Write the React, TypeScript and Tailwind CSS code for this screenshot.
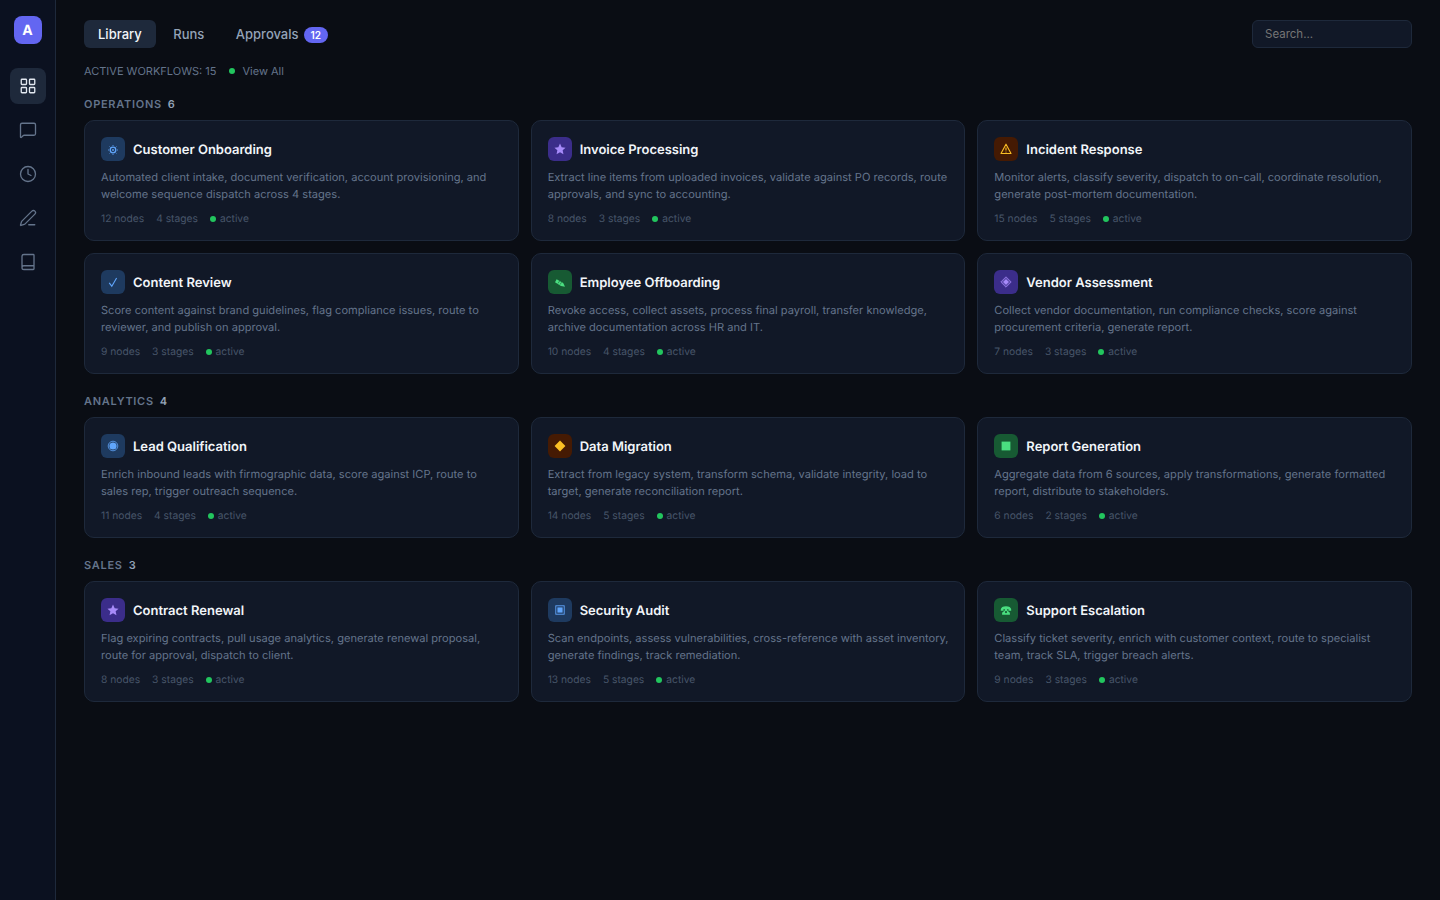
import { Book, Clock, LayoutGrid, MessageSquare, PenLine } from "lucide-react";

const sans = "font-['Inter','Noto_Sans',sans-serif]";

type Tone = "blue" | "purple" | "amber" | "green";
type GlyphName = "gear" | "star" | "warn" | "check" | "pencil" | "gem" | "target" | "diamond" | "square" | "frame" | "phone";

type Workflow = {
  name: string;
  desc: string;
  nodes: number;
  stages: number;
  glyph: GlyphName;
  tone: Tone;
};

const tones: Record<Tone, string> = {
  blue: "bg-[#1e3a5f] text-[#60a5fa]",
  purple: "bg-[#3b2d8a] text-[#a78bfa]",
  amber: "bg-[#451a03] text-[#fbbf24]",
  green: "bg-[#175a33] text-[#4ade80]",
};

const sections: { label: string; count: number; items: Workflow[] }[] = [
  {
    label: "OPERATIONS",
    count: 6,
    items: [
      {
        name: "Customer Onboarding",
        desc: "Automated client intake, document verification, account provisioning, and welcome sequence dispatch across 4 stages.",
        nodes: 12,
        stages: 4,
        glyph: "gear",
        tone: "blue",
      },
      {
        name: "Invoice Processing",
        desc: "Extract line items from uploaded invoices, validate against PO records, route approvals, and sync to accounting.",
        nodes: 8,
        stages: 3,
        glyph: "star",
        tone: "purple",
      },
      {
        name: "Incident Response",
        desc: "Monitor alerts, classify severity, dispatch to on-call, coordinate resolution, generate post-mortem documentation.",
        nodes: 15,
        stages: 5,
        glyph: "warn",
        tone: "amber",
      },
      {
        name: "Content Review",
        desc: "Score content against brand guidelines, flag compliance issues, route to reviewer, and publish on approval.",
        nodes: 9,
        stages: 3,
        glyph: "check",
        tone: "blue",
      },
      {
        name: "Employee Offboarding",
        desc: "Revoke access, collect assets, process final payroll, transfer knowledge, archive documentation across HR and IT.",
        nodes: 10,
        stages: 4,
        glyph: "pencil",
        tone: "green",
      },
      {
        name: "Vendor Assessment",
        desc: "Collect vendor documentation, run compliance checks, score against procurement criteria, generate report.",
        nodes: 7,
        stages: 3,
        glyph: "gem",
        tone: "purple",
      },
    ],
  },
  {
    label: "ANALYTICS",
    count: 4,
    items: [
      {
        name: "Lead Qualification",
        desc: "Enrich inbound leads with firmographic data, score against ICP, route to sales rep, trigger outreach sequence.",
        nodes: 11,
        stages: 4,
        glyph: "target",
        tone: "blue",
      },
      {
        name: "Data Migration",
        desc: "Extract from legacy system, transform schema, validate integrity, load to target, generate reconciliation report.",
        nodes: 14,
        stages: 5,
        glyph: "diamond",
        tone: "amber",
      },
      {
        name: "Report Generation",
        desc: "Aggregate data from 6 sources, apply transformations, generate formatted report, distribute to stakeholders.",
        nodes: 6,
        stages: 2,
        glyph: "square",
        tone: "green",
      },
    ],
  },
  {
    label: "SALES",
    count: 3,
    items: [
      {
        name: "Contract Renewal",
        desc: "Flag expiring contracts, pull usage analytics, generate renewal proposal, route for approval, dispatch to client.",
        nodes: 8,
        stages: 3,
        glyph: "star",
        tone: "purple",
      },
      {
        name: "Security Audit",
        desc: "Scan endpoints, assess vulnerabilities, cross-reference with asset inventory, generate findings, track remediation.",
        nodes: 13,
        stages: 5,
        glyph: "frame",
        tone: "blue",
      },
      {
        name: "Support Escalation",
        desc: "Classify ticket severity, enrich with customer context, route to specialist team, track SLA, trigger breach alerts.",
        nodes: 9,
        stages: 3,
        glyph: "phone",
        tone: "green",
      },
    ],
  },
];

// 24px box, same size as the tile, so coordinates below read as pixels in the tile
function Glyph({ name }: { name: GlyphName }) {
  let body = null;
  if (name === "gear") {
    body = (
      <>
        <circle cx="12" cy="13" r="2.8" fill="none" stroke="currentColor" strokeWidth="1.3" />
        <circle cx="12" cy="13" r="0.9" fill="currentColor" />
        <path d="M12 9v-.9M12 17.9V17M8 13h-.9M16.9 13H16M9.2 10.2l-.6-.6M15.4 16.4l-.6-.6M14.8 10.2l.6-.6M8.6 16.4l.6-.6" stroke="currentColor" strokeWidth="0.9" />
      </>
    );
  } else if (name === "star") {
    body = <path d="M12 6.6l1.65 3.6 3.9.45-2.9 2.65.8 3.85L12 15.2l-3.45 1.95.8-3.85-2.9-2.65 3.9-.45z" fill="currentColor" />;
  } else if (name === "warn") {
    body = (
      <>
        <path d="M12 7.2l5 9.3H7z" fill="none" stroke="currentColor" strokeWidth="1.1" strokeLinejoin="round" />
        <path d="M12 10.6v3" stroke="currentColor" strokeWidth="1.1" />
        <circle cx="12" cy="15" r="0.6" fill="currentColor" />
      </>
    );
  } else if (name === "check") {
    body = <path d="M8.2 12.8l2.6 3.4 4.8-8.2" fill="none" stroke="currentColor" strokeWidth="1.1" />;
  } else if (name === "pencil") {
    body = (
      <>
        <path d="M8.6 9.3l6.6 3.6 1.8 3.8-4-.6-6-3.8z" fill="currentColor" />
        <path d="M10 13.4l1.6-2.4M12 14.6l1.6-2.4" stroke="#175a33" strokeWidth="0.6" />
      </>
    );
  } else if (name === "gem") {
    body = (
      <>
        <path d="M12 6.8L17.2 12 12 17.2 6.8 12z" fill="currentColor" fillOpacity="0.35" stroke="currentColor" strokeWidth="0.7" />
        <path d="M12 9.2l2.8 2.8-2.8 2.8L9.2 12z" fill="currentColor" />
      </>
    );
  } else if (name === "target") {
    body = (
      <>
        <circle cx="12" cy="12" r="4.8" fill="none" stroke="currentColor" strokeWidth="0.8" />
        <circle cx="12" cy="12" r="3.6" fill="currentColor" />
      </>
    );
  } else if (name === "diamond") {
    body = <path d="M12 6.6l5.4 5.4-5.4 5.4L6.6 12z" fill="currentColor" />;
  } else if (name === "square") {
    body = <rect x="7.6" y="7.6" width="8.8" height="8.8" fill="currentColor" />;
  } else if (name === "frame") {
    body = (
      <>
        <rect x="7.8" y="7.8" width="8.4" height="8.4" fill="none" stroke="currentColor" strokeWidth="0.9" />
        <rect x="9.4" y="9.4" width="5.2" height="5.2" fill="currentColor" />
      </>
    );
  } else {
    body = (
      <path
        d="M6.8 11.6c0-2.2 2.3-3.4 5.2-3.4s5.2 1.2 5.2 3.4v1.2h-2.8v-1.7h-1.1v1.3l2.6 2.4v1.9H8.1v-1.9l2.6-2.4v-1.3H9.6v1.7H6.8zM12 13a1.1 1.1 0 1 0 0 2.2 1.1 1.1 0 0 0 0-2.2z"
        fill="currentColor"
        fillRule="evenodd"
      />
    );
  }
  return (
    <svg width="24" height="24" viewBox="0 0 24 24" aria-hidden="true">
      {body}
    </svg>
  );
}

function WorkflowCard({ item }: { item: Workflow }) {
  return (
    <div className="rounded-[10px] border border-[#1e293b] bg-[#111827] p-4">
      <div className="flex h-6 items-center gap-2">
        <span className={`h-6 w-6 shrink-0 rounded-md ${tones[item.tone]}`}>
          <Glyph name={item.glyph} />
        </span>
        <span className="h-6 text-[13px] leading-[26px] font-semibold text-[#f1f5f9]">{item.name}</span>
      </div>
      <p className="mt-2 -mr-1 text-[11.1px] leading-[17px] text-[#64748b]">{item.desc}</p>
      <div className="mt-[7px] -mb-[3px] flex items-center gap-3 text-[10.25px] leading-[15px] text-[#475569]">
        <span className="pt-[2px]">{item.nodes} nodes</span>
        <span className="pt-[2px]">{item.stages} stages</span>
        <span className="flex items-center gap-1">
          <span className="h-1.5 w-1.5 rounded-full bg-[#22c55e]" />
          <span className="pt-[2px]">active</span>
        </span>
      </div>
    </div>
  );
}

export default function App() {
  const nav = [LayoutGrid, MessageSquare, Clock, PenLine, Book];

  return (
    <div className={`flex h-[900px] overflow-hidden bg-[#0a0d14] antialiased [text-rendering:geometricPrecision] ${sans}`}>
      <aside className="flex w-14 shrink-0 flex-col items-center gap-2 border-r border-[#1e293b] bg-[#0b1120] pt-4">
        <div className="mb-4 flex h-7 w-7 items-center justify-center rounded-lg bg-[#6366f1] pt-px text-sm font-bold text-white">
          A
        </div>
        {nav.map((Icon, i) => (
          <button
            key={i}
            type="button"
            className={`flex h-9 w-9 items-center justify-center rounded-lg ${
              i === 0 ? "bg-[#1e293b] text-[#e2e8f0]" : "text-[#64748b]"
            }`}
          >
            <Icon size={18} strokeWidth={1.75} />
          </button>
        ))}
      </aside>

      <main className="min-w-0 flex-1 px-7 pt-5">
        <div className="flex items-center justify-between">
          <div className="flex items-center gap-[3.5px]">
            <button type="button" className="h-7 rounded-md bg-[#1e293b] px-3.5 pt-px text-[13px] font-medium text-[#f1f5f9]">
              Library
            </button>
            <button type="button" className="h-7 rounded-md px-3.5 pt-px text-[13px] font-medium text-[#94a3b8]">
              Runs
            </button>
            <button type="button" className="flex h-7 items-center gap-[5px] rounded-md px-3.5 pt-px text-[13px] font-medium text-[#94a3b8]">
              Approvals
              <span className="rounded-full bg-[#6366f1] px-[7px] text-[10px] leading-4 font-semibold text-white">12</span>
            </button>
          </div>
          <input
            type="text"
            placeholder="Search..."
            className="h-7 w-40 rounded-md border border-[#1e293b] bg-[#111827] px-3 text-[11.5px] text-[#e2e8f0] outline-none placeholder:text-[#757575]"
          />
        </div>

        <div className="mt-[15px] flex items-center text-[11px] leading-4 text-[#64748b]">
          <span>ACTIVE WORKFLOWS: 15</span>
          <span className="ml-[13px] h-1.5 w-1.5 rounded-full bg-[#22c55e]" />
          <span className="ml-[7px]">View All</span>
        </div>

        <div className="mt-[17px] flex flex-col gap-[19px]">
          {sections.map((section) => (
            <section key={section.label}>
              <div className="mb-2 flex gap-1.5 text-[11px] leading-4 font-semibold tracking-[0.065em] text-[#64748b]">
                <span>{section.label}</span>
                <span className="text-[#94a3b8]">{section.count}</span>
              </div>
              <div className="grid grid-cols-3 gap-3">
                {section.items.map((item) => (
                  <WorkflowCard key={item.name} item={item} />
                ))}
              </div>
            </section>
          ))}
        </div>
      </main>
    </div>
  );
}
